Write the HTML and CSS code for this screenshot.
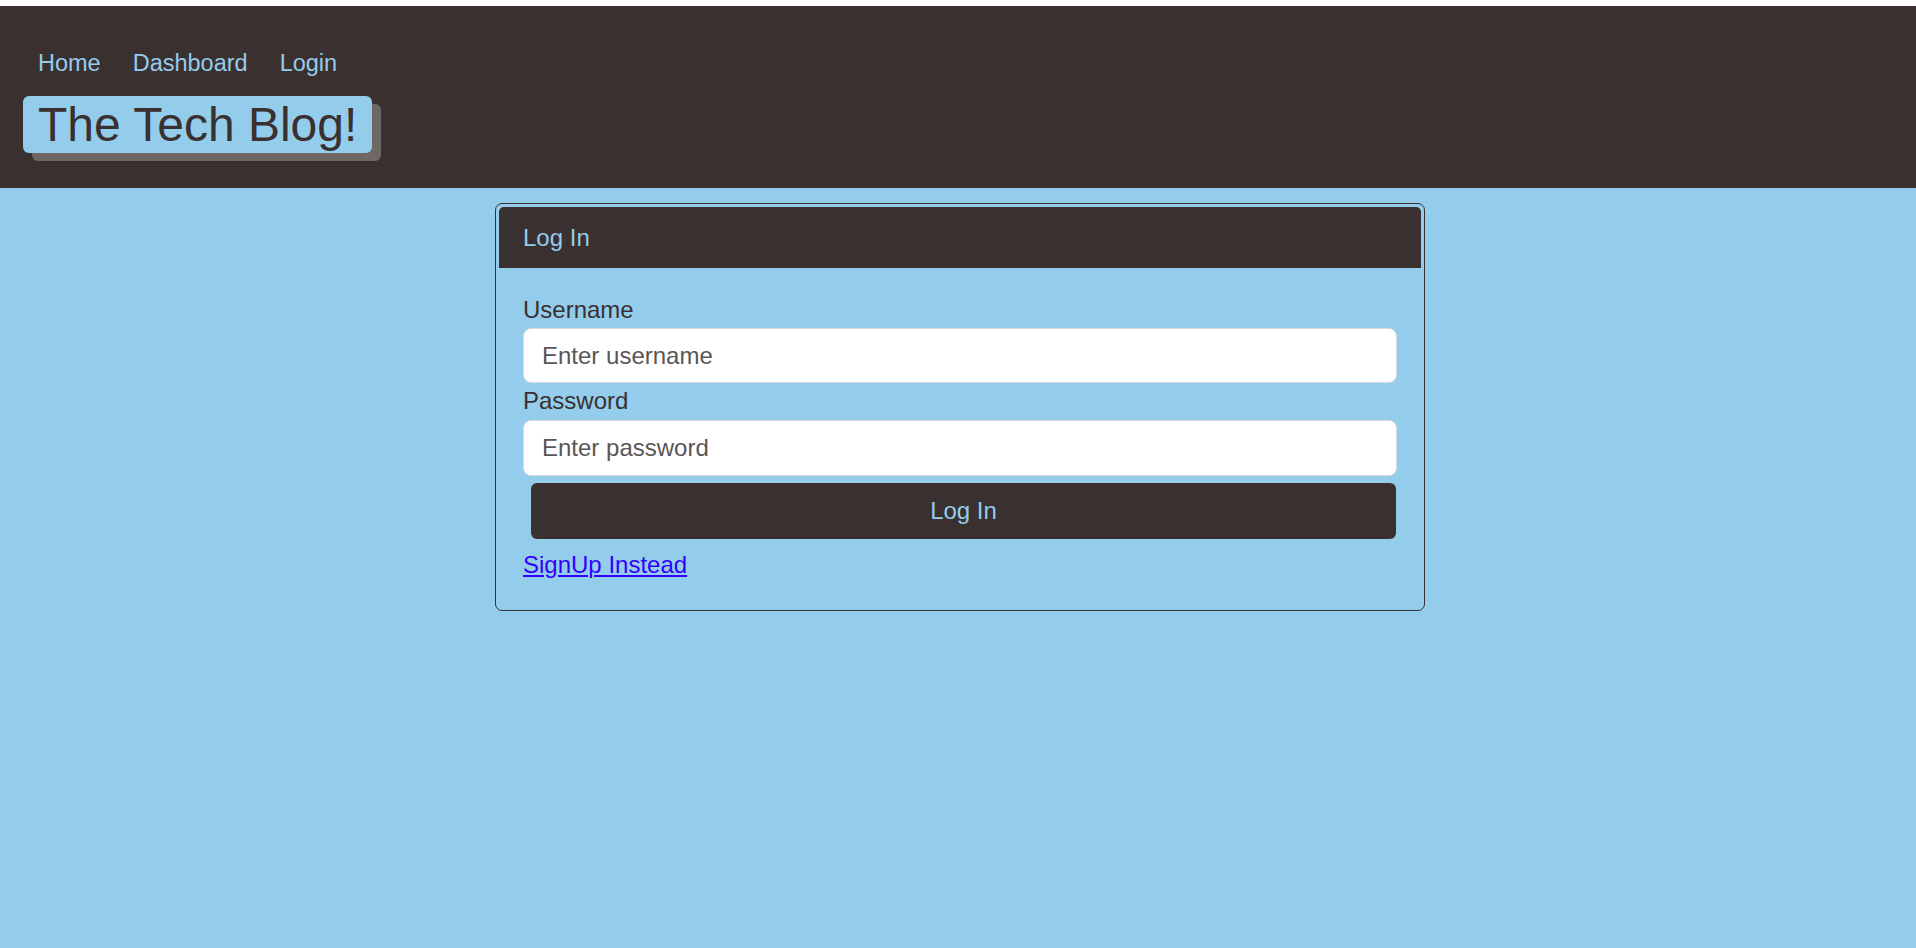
FILE: index.html
```html
<!DOCTYPE html>
<html lang="en">
<head>
<meta charset="utf-8">
<title>The Tech Blog!</title>
<link rel="stylesheet" href="styles.css">
</head>
<body>
<div class="page">
  <header class="site-header">
    <nav class="nav">
      <a class="nav-link" href="#">Home</a>
      <a class="nav-link" href="#">Dashboard</a>
      <a class="nav-link" href="#">Login</a>
    </nav>
    <h1 class="brand">The Tech Blog!</h1>
  </header>
  <main class="main">
    <section class="card">
      <div class="card-header">Log In</div>
      <form class="card-body">
        <label class="field-label" for="username">Username</label>
        <input class="field-input field-input-first" id="username" type="text" placeholder="Enter username">
        <label class="field-label field-label-second" for="password">Password</label>
        <input class="field-input field-input-second" id="password" type="password" placeholder="Enter password">
        <button class="submit-btn" type="button">Log In</button>
        <a class="signup-link" href="#">SignUp Instead</a>
      </form>
    </section>
  </main>
</div>
</body>
</html>
```
FILE: styles.css
```css
html, body {
  margin: 0;
  padding: 0;
}
body {
  background: #94cceb;
  font-family: "Liberation Sans", Arial, sans-serif;
  color: #3a3030;
  min-height: 948px;
}
.page {
  border-top: 6px solid #ffffff;
}
.site-header {
  background: #3a3030;
  padding: 43px 0 35px 22px;
}
.nav {
  display: flex;
}
.nav-link {
  color: #94cceb;
  text-decoration: none;
  font-size: 23.5px;
  line-height: 28px;
  padding: 0 16px;
}
.brand {
  display: inline-block;
  margin: 19px 0 0 1px;
  padding: 0 15px;
  background: #94cceb;
  color: #3a3030;
  font-size: 48px;
  font-weight: normal;
  line-height: 57px;
  border-radius: 6px;
  box-shadow: 9px 8px 0 #6e6764;
}
.main {
  padding-top: 15px;
}
.card {
  width: 922px;
  margin-left: 495px;
  border: 1px solid #3a3030;
  border-radius: 7px;
  padding: 3px;
}
.card-header {
  background: #3a3030;
  color: #94cceb;
  height: 61px;
  display: flex;
  align-items: center;
  padding: 0 24px;
  font-size: 24px;
  border-radius: 5px 5px 0 0;
}
.card-body {
  display: flex;
  flex-direction: column;
  align-items: flex-start;
  padding: 28px 24px 28px;
}
.field-label {
  font-size: 24px;
  line-height: 28px;
  color: #3a3030;
}
.field-label-second {
  margin-top: 4px;
}
.field-input {
  box-sizing: border-box;
  width: 100%;
  margin-top: 4px;
  height: 55px;
  padding: 0 18px;
  font-family: "Liberation Sans", Arial, sans-serif;
  font-size: 24px;
  color: #3a3030;
  background: #ffffff;
  border: 1px solid #d3dbe2;
  border-radius: 8px;
  outline: none;
}
.field-input-second {
  margin-top: 5px;
  height: 56px;
}
.field-input::placeholder {
  color: #5a5656;
}
.submit-btn {
  box-sizing: border-box;
  margin: 7px 0 0 8px;
  width: calc(100% - 9px);
  height: 56px;
  background: #3a3030;
  color: #94cceb;
  border: none;
  border-radius: 6px;
  font-family: "Liberation Sans", Arial, sans-serif;
  font-size: 24px;
  cursor: pointer;
}
.signup-link {
  margin-top: 12px;
  font-size: 24px;
  line-height: 28px;
  color: #3300ff;
  text-decoration: underline;
}
```
